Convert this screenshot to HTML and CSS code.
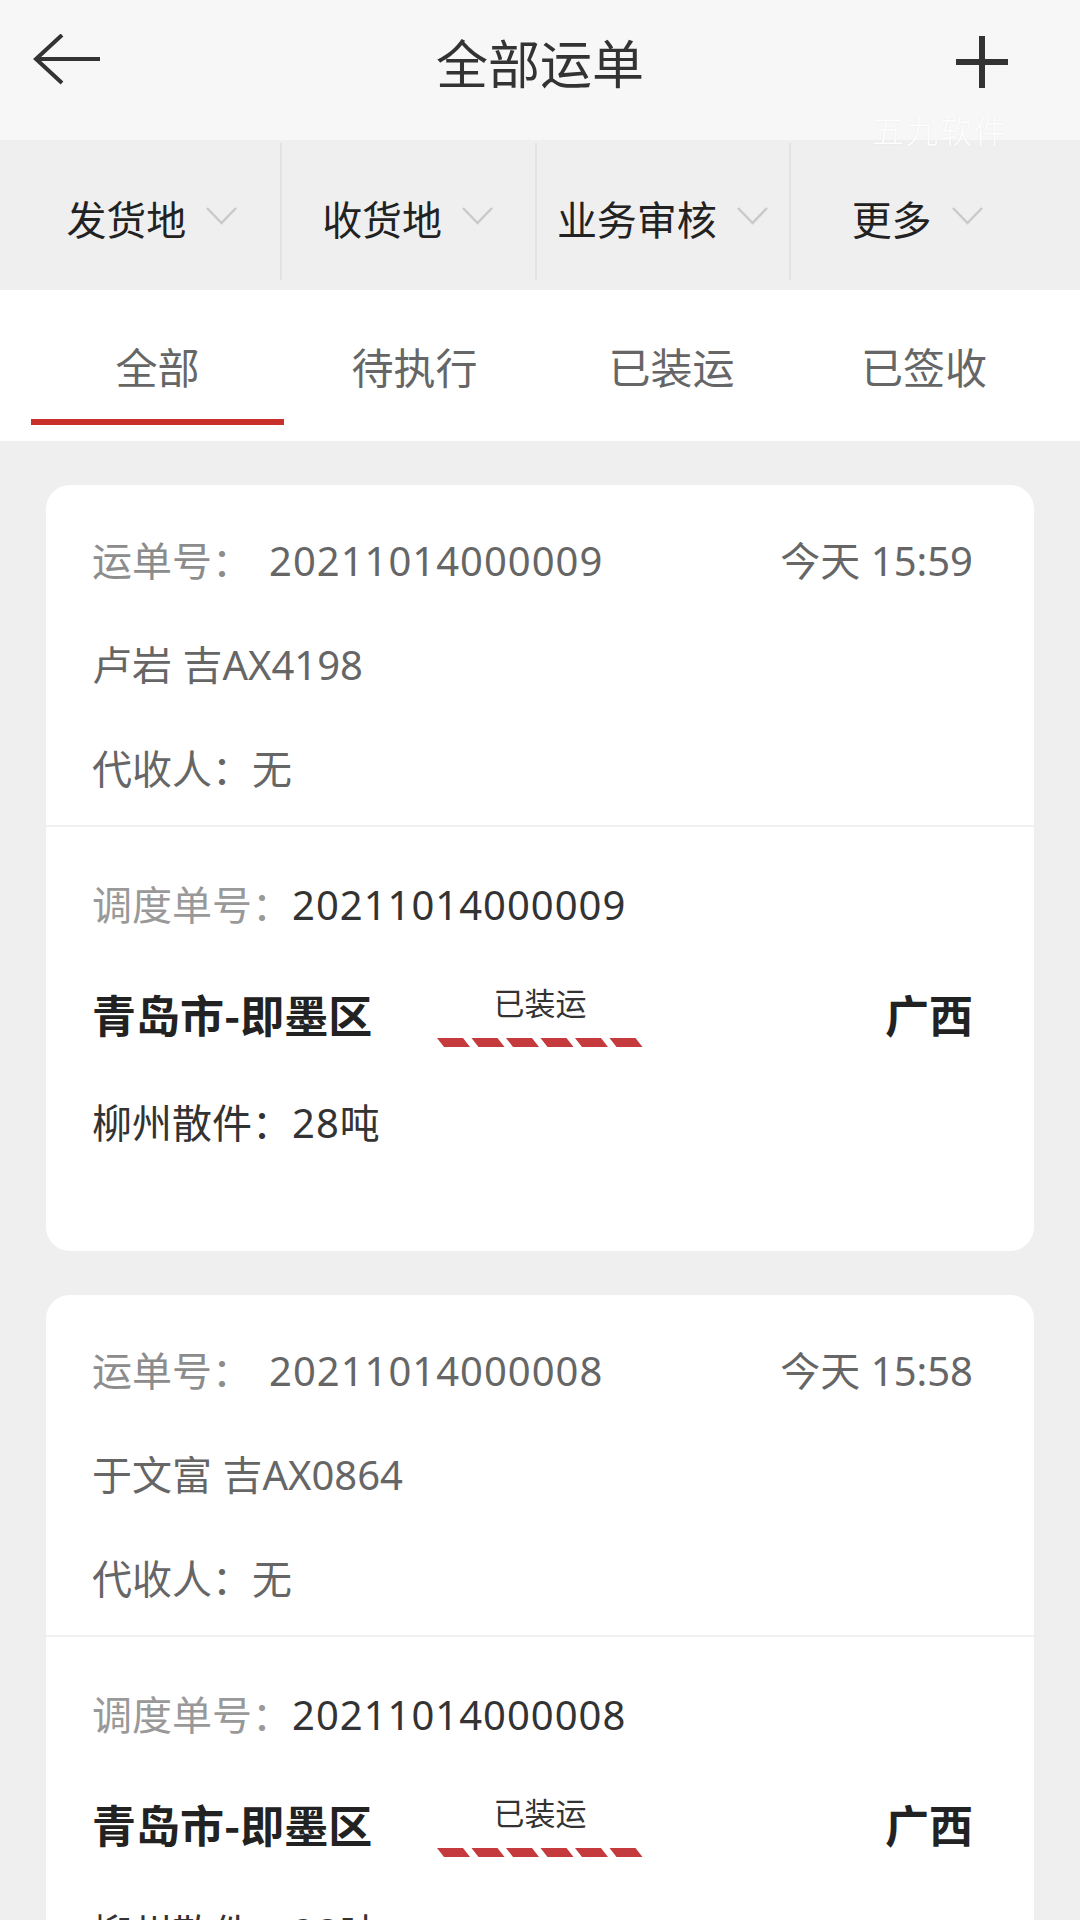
FILE: index.html
```html
<!DOCTYPE html>
<html>
<head>
<meta charset="utf-8">
<title>全部运单</title>
<link rel="stylesheet" href="styles.css">
</head>
<body>

<div class="page">
	<header class="topbar">
		<svg class="back" width="70" height="56" viewBox="0 0 70 56"><path d="M30 1 L4 25 L30 49 M4 25 H68" fill="none" stroke="#333" stroke-width="4"/></svg>
		<h1 class="title">全部运单</h1>
		<svg class="add" width="56" height="56" viewBox="0 0 56 56"><path d="M28 2 V54 M2 28 H54" fill="none" stroke="#333" stroke-width="6"/></svg>
	</header>
	<div class="watermark">五九软件</div>

	<nav class="filters">
		<div class="filter"><span>发货地</span><svg width="33" height="20" viewBox="0 0 33 20"><polyline points="2,3 16.5,18 31,3" fill="none" stroke="#cacaca" stroke-width="2.5"/></svg></div>
		<div class="filter"><span>收货地</span><svg width="33" height="20" viewBox="0 0 33 20"><polyline points="2,3 16.5,18 31,3" fill="none" stroke="#cacaca" stroke-width="2.5"/></svg></div>
		<div class="filter"><span>业务审核</span><svg width="33" height="20" viewBox="0 0 33 20"><polyline points="2,3 16.5,18 31,3" fill="none" stroke="#cacaca" stroke-width="2.5"/></svg></div>
		<div class="filter"><span>更多</span><svg width="33" height="20" viewBox="0 0 33 20"><polyline points="2,3 16.5,18 31,3" fill="none" stroke="#cacaca" stroke-width="2.5"/></svg></div>
	</nav>

	<nav class="tabs">
		<div class="tab active"><span>全部</span></div>
		<div class="tab"><span>待执行</span></div>
		<div class="tab"><span>已装运</span></div>
		<div class="tab"><span>已签收</span></div>
	</nav>

	<main class="list">
		<div class="card">
			<div class="card-top">
				<div class="row head">
					<div><span class="label">运单号：</span><span class="num waybill">20211014000009</span></div>
					<div class="time">今天 15:59</div>
				</div>
				<div class="row">卢岩 吉AX4198</div>
				<div class="row">代收人：无</div>
			</div>
			<div class="card-bottom">
				<div class="row dispatch"><span class="label">调度单号：</span><span class="num">20211014000009</span></div>
				<div class="route">
					<div class="city">青岛市-即墨区</div>
					<div class="status">
						<div class="status-text">已装运</div>
						<svg width="206" height="9" viewBox="0 0 206 9"><g fill="#c53a3d"><polygon points="0,0 26,0 33,9 7,9"/><polygon points="34.5,0 60.5,0 67.5,9 41.5,9"/><polygon points="69,0 95,0 102,9 76,9"/><polygon points="103.5,0 129.5,0 136.5,9 110.5,9"/><polygon points="138,0 164,0 171,9 145,9"/><polygon points="172.5,0 198.5,0 205.5,9 179.5,9"/></g></svg>
					</div>
					<div class="city dest">广西</div>
				</div>
				<div class="row cargo">柳州散件：<span class="num">28</span>吨</div>
			</div>
		</div>

		<div class="card">
			<div class="card-top">
				<div class="row head">
					<div><span class="label">运单号：</span><span class="num waybill">20211014000008</span></div>
					<div class="time">今天 15:58</div>
				</div>
				<div class="row">于文富 吉AX0864</div>
				<div class="row">代收人：无</div>
			</div>
			<div class="card-bottom">
				<div class="row dispatch"><span class="label">调度单号：</span><span class="num">20211014000008</span></div>
				<div class="route">
					<div class="city">青岛市-即墨区</div>
					<div class="status">
						<div class="status-text">已装运</div>
						<svg width="206" height="9" viewBox="0 0 206 9"><g fill="#c53a3d"><polygon points="0,0 26,0 33,9 7,9"/><polygon points="34.5,0 60.5,0 67.5,9 41.5,9"/><polygon points="69,0 95,0 102,9 76,9"/><polygon points="103.5,0 129.5,0 136.5,9 110.5,9"/><polygon points="138,0 164,0 171,9 145,9"/><polygon points="172.5,0 198.5,0 205.5,9 179.5,9"/></g></svg>
					</div>
					<div class="city dest">广西</div>
				</div>
				<div class="row cargo">柳州散件：<span class="num">28</span>吨</div>
			</div>
		</div>
	</main>
</div>

</body>
</html>
```

FILE: styles.css
```css
body {
	margin: 0;
	height: 1920px;
	overflow: hidden;
	background: #efefef;
	font-family: "Noto Sans", "Noto Sans CJK SC", sans-serif;
	color: #333;
}

.page {
	position: relative;
	width: 1080px;
}

/* top bar */
.topbar {
	display: grid;
	grid-template-columns: 1fr auto 1fr;
	align-items: center;
	height: 124px;
	padding: 0 32px 16px;
	background: #f7f7f7;
}
.back {
	justify-self: start;
}
.add {
	justify-self: end;
	margin-right: 38px;
}
.title {
	margin: 0;
	font-size: 52px;
	font-weight: 400;
	color: #333;
	line-height: 124px;
	font-family: "Noto Sans CJK SC", sans-serif;
}
.watermark {
	position: absolute;
	left: 872px; top: 106px;
	font-family: "Noto Sans CJK SC", sans-serif;
	font-weight: 300;
	font-size: 32px;
	letter-spacing: 2px;
	color: rgba(255,255,255,0.95);
	text-shadow: 0 0 2px rgba(0,0,0,0.06);
}

/* filter bar */
.filters {
	display: grid;
	grid-template-columns: repeat(4, 1fr);
	padding: 3px 36px 10px 25px;
	background: #efefef;
	height: 137px;
}
.filter {
	display: flex;
	align-items: center;
	justify-content: center;
	gap: 19px;
	padding-top: 12px;
	font-size: 40px;
	color: #222;
	font-family: "Noto Sans CJK SC", sans-serif;
}
.filter + .filter {
	border-left: 2px solid #e3e3e3;
}
.filter svg {
	margin-bottom: 6px;
}

/* tabs */
.tabs {
	display: grid;
	grid-template-columns: 257px 257px 257px 248px;
	padding: 0 0 0 29px;
	background: #fff;
}
.tab {
	display: flex;
	flex-direction: column;
	align-items: center;
	padding-top: 46px;
	font-size: 42px;
	line-height: 60px;
	color: #666;
	font-family: "Noto Sans CJK SC", sans-serif;
}
.tab::after {
	content: "";
	display: block;
	align-self: stretch;
	margin: 23px 2px 16px;
	height: 6px;
}
.tab.active::after {
	background: #c9302c;
}

/* list */
.list {
	padding: 44px 46px 0;
}
.card {
	background: #fff;
	border-radius: 24px;
	margin-bottom: 44px;
	font-size: 40px;
}
.card-top {
	padding: 24px 61px 4px 46px;
	border-bottom: 2px solid #f1f1f1;
	color: #666;
}
.card-bottom {
	padding: 26px 61px 76px 46px;
}
.row {
	line-height: 104px;
	white-space: nowrap;
}
.head {
	display: flex;
	justify-content: space-between;
}
.label {
	color: #8c8c8c;
}
.num {
	letter-spacing: 1px;
}
.waybill {
	margin-left: 17px;
}
.dispatch .label {
	color: #999;
}
.dispatch .num {
	color: #333;
}

.route {
	display: grid;
	grid-template-columns: 1fr 221px 1fr;
	align-items: center;
	height: 114px;
}
.city {
	font-size: 44px;
	font-weight: 700;
	color: #222;
	font-family: "Noto Sans CJK SC", sans-serif;
}
.dest {
	justify-self: end;
}
.status {
	display: flex;
	flex-direction: column;
	align-items: center;
	padding-left: 15px;
}
.status-text {
	font-size: 31px;
	line-height: 40px;
	color: #333;
	font-family: "Noto Sans CJK SC", sans-serif;
}
.status svg {
	display: block;
	margin-top: 16px;
}
.cargo {
	color: #333;
}
```
